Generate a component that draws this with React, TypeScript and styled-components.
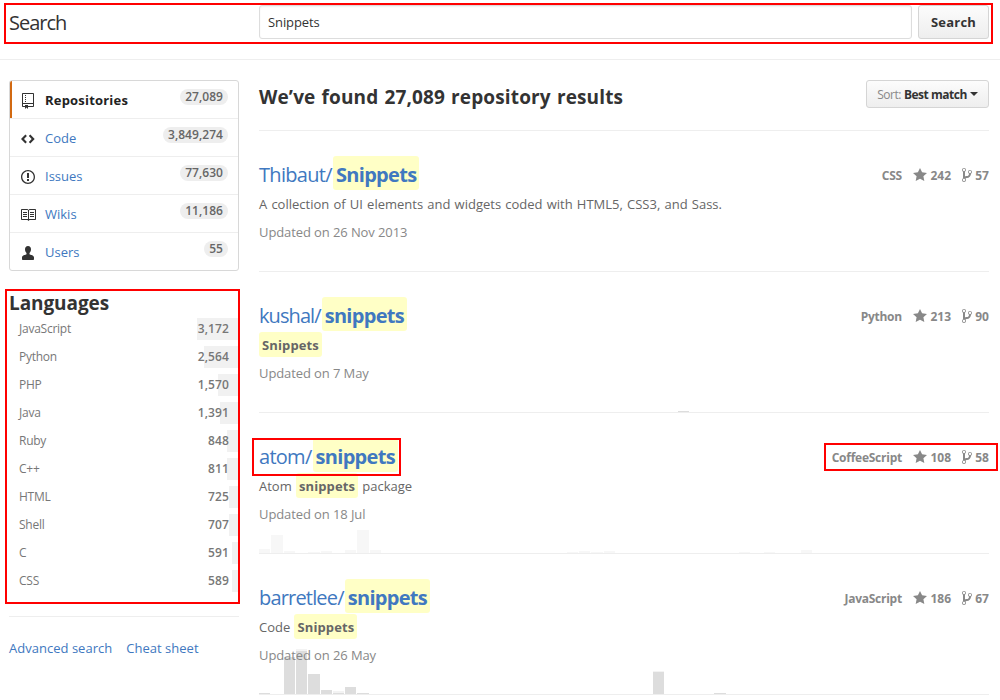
import React from 'react';
import styled, { createGlobalStyle } from 'styled-components';

const GlobalStyle = createGlobalStyle`
  * { box-sizing: border-box; }
  body {
    margin: 0;
    background: #fff;
    color: #333;
    font: 13px/20px "Open Sans", "Noto Sans", sans-serif;
  }
`;

const Page = styled.div`
  position: relative;
  width: 1000px;
  height: 700px;
  overflow: hidden;
`;

const Header = styled.header`
  display: grid;
  grid-template-columns: 250px 653px 71px;
  column-gap: 0;
  height: 60px;
  padding: 5px 11px 0 9px;
  border-bottom: 1px solid #eee;
`;

const PageTitle = styled.h1`
  margin: 0;
  font-size: 20px;
  font-weight: 400;
  line-height: 36px;
  letter-spacing: -1px;
`;

const SearchInput = styled.input`
  width: 653px;
  height: 34px;
  padding: 0 8px;
  border: 1px solid #ddd;
  border-radius: 3px;
  outline: none;
  color: #333;
  font: 13px "Open Sans", sans-serif;
  letter-spacing: -0.1px;
  box-shadow: inset 0 1px 2px rgba(0, 0, 0, 0.06);
`;

const Button = styled.button<{ $compact?: boolean }>`
  display: flex;
  align-items: center;
  justify-content: center;
  gap: 3px;
  width: ${p => (p.$compact ? 123 : 71)}px;
  height: ${p => (p.$compact ? 28 : 34)}px;
  margin-left: ${p => (p.$compact ? 0 : 6)}px;
  padding: 0;
  border: 1px solid #d5d5d5;
  border-radius: 3px;
  background: linear-gradient(#fcfcfc, #eee);
  color: #333;
  font: 700 ${p => (p.$compact ? 12 : 13)}px "Open Sans", sans-serif;
  letter-spacing: ${p => (p.$compact ? -0.48 : 0.2)}px;
`;

const SortLabel = styled.span`
  color: #888;
  font-weight: 400;
`;

const Caret = styled.span`
  border: 4px solid transparent;
  border-top-color: #333;
  border-bottom: 0;
`;

const Columns = styled.div`
  display: grid;
  grid-template-columns: 230px 730px;
  column-gap: 20px;
  padding: 20px 11px 0 9px;
`;

const Menu = styled.nav`
  border: 1px solid #d8d8d8;
  border-radius: 3px;
  overflow: hidden;
`;

const MenuItem = styled.a<{ $active?: boolean }>`
  display: flex;
  align-items: flex-start;
  height: 38px;
  padding: 9px 10px 0 11px;
  border-bottom: 1px solid #eee;
  color: ${p => (p.$active ? '#222' : '#4078c0')};
  font-weight: ${p => (p.$active ? 700 : 400)};
  letter-spacing: ${p => (p.$active ? 0.2 : 0)}px;
  box-shadow: ${p => (p.$active ? 'inset 2px 0 #d26911' : 'none')};
  &:last-child { border-bottom: 0; height: 37px; }
`;

const MenuIcon = styled.svg`
  flex: none;
  width: 16px;
  height: 16px;
  margin: 3px 8px 0 0;
  fill: #333;
`;

const Count = styled.span`
  height: 16px;
  margin: -1px 0 0 auto;
  padding: 0 5px;
  border-radius: 8px;
  background: #eee;
  color: #666;
  font-size: 12px;
  font-weight: 600;
  line-height: 16px;
  letter-spacing: 0.05px;
`;

const SideHeading = styled.h2`
  margin: 18px 0 0;
  font-size: 19px;
  font-weight: 700;
  line-height: 29px;
  letter-spacing: -0.08px;
`;

const LanguageRow = styled.div`
  position: relative;
  display: flex;
  justify-content: space-between;
  height: 22px;
  margin-bottom: 6px;
  padding: 0 10px;
  color: #777;
  font-size: 12px;
  line-height: 22px;
  letter-spacing: -0.25px;
`;

const LanguageBar = styled.span`
  position: absolute;
  top: 0;
  right: 0;
  height: 22px;
  background: #f1f1f1;
`;

const LanguageCount = styled.b`
  position: relative;
  font-weight: 600;
  letter-spacing: 0.1px;
`;

const SideLinks = styled.div`
  display: flex;
  gap: 14px;
  margin-top: 18px;
  padding-top: 21px;
  border-top: 1px solid #eee;
  color: #4078c0;
  letter-spacing: 0.02px;
`;

const LanguageList = styled.div`
  display: flow-root;
`;

const ResultsHead = styled.div`
  display: flex;
  justify-content: space-between;
  height: 51px;
  border-bottom: 1px solid #eee;
`;

const ResultsTitle = styled.h2`
  margin: 0;
  font-size: 19px;
  font-weight: 700;
  line-height: 34px;
  letter-spacing: 0.14px;
  word-spacing: 1px;
`;

const Result = styled.article`
  position: relative;
  height: 141px;
  padding-top: 25px;
  border-bottom: 1px solid #eee;
`;

const ResultTop = styled.div`
  display: flex;
  justify-content: space-between;
  height: 34px;
`;

const RepoName = styled.h3<{ $tracking: number }>`
  display: flex;
  margin: 0;
  color: #4078c0;
  font-size: 20px;
  font-weight: 400;
  line-height: 37px;
  letter-spacing: ${p => p.$tracking}px;
`;

const Mark = styled.mark<{ $large?: boolean }>`
  display: inline-block;
  height: ${p => (p.$large ? 34 : 25)}px;
  margin-left: ${p => (p.$large ? 1 : 0)}px;
  padding: 0 3px;
  border-radius: 3px;
  background: #ffffc6;
  color: inherit;
  font-weight: 700;
  letter-spacing: ${p => (p.$large ? -0.7 : 0.12)}px;
`;

const Stats = styled.div`
  display: flex;
  height: 34px;
  color: #888;
  font-size: 12px;
  font-weight: 700;
  line-height: 40px;
  letter-spacing: -0.25px;
`;

const Language = styled.span`
  margin-right: 11.500px;
`;

const StatNumber = styled.span<{ $last?: boolean }>`
  margin: 0 ${p => (p.$last ? 0 : 11)}px 0 3px;
  letter-spacing: 0.05px;
`;

const StatIcon = styled.svg`
  height: 16px;
  margin-top: 11px;
  fill: #888;
`;

const Description = styled.p`
  display: flex;
  height: 25px;
  margin: 1px 0 0;
  color: #666;
  line-height: 27px;
  letter-spacing: 0;
  word-spacing: 0.8px;
  white-space: pre;
`;

const Updated = styled.p`
  position: relative;
  margin: 6px 0 0;
  color: #888;
  line-height: 21px;
  letter-spacing: -0.1px;
`;

const Chart = styled.svg`
  position: absolute;
  left: 0;
  bottom: 0;
  width: 640px;
  height: 46px;
`;

const Highlight = styled.div<{ $x: number; $y: number; $w: number; $h: number }>`
  position: absolute;
  left: ${p => p.$x}px;
  top: ${p => p.$y}px;
  width: ${p => p.$w}px;
  height: ${p => p.$h}px;
  border: 2px solid #f00;
  pointer-events: none;
`;

const icons = {
  repo: <path d="M4 9H3V8h1v1zm0-3H3v1h1V6zm0-2H3v1h1V4zm0-2H3v1h1V2zm8-1v12c0 .55-.45 1-1 1H6v2l-1.5-1.5L3 16v-2H1c-.55 0-1-.45-1-1V1c0-.55.45-1 1-1h10c.55 0 1 .45 1 1zm-1 10H1v2h2v-1h3v1h5v-2zm0-10H1v9h10V1z" />,
  code: <path d="M9.300 3.600L7.800 5.100 10.700 8 7.800 10.900l1.500 1.500L13.700 8zM4.400 3.600L0 8l4.400 4.400 1.500-1.500L3 8l2.900-2.900z" />,
  issue: <path d="M7 2.300c3.140 0 5.700 2.560 5.700 5.700s-2.560 5.700-5.700 5.700A5.710 5.710 0 0 1 1.300 8c0-3.140 2.560-5.700 5.700-5.700zM7 1C3.140 1 0 4.140 0 8s3.140 7 7 7 7-3.140 7-7-3.140-7-7-7zm1 3H6v5h2V4zm0 6H6v2h2v-2z" />,
  book: <path d="M2 5h4v1H2V5zm0 3h4V7H2v1zm0 2h4V9H2v1zm11-5H9v1h4V5zm0 2H9v1h4V7zm0 2H9v1h4V9zm2-6v9c0 .55-.45 1-1 1H8.500l-1 1-1-1H1c-.55 0-1-.45-1-1V3c0-.55.45-1 1-1h5.500l1 1 1-1H14c.55 0 1 .45 1 1zM7 3.500L6.500 3H1v9h6V3.500zM14 3H8.500l-.5.5V12h6V3z" />,
  person: <path d="M6 1c-2 0-3 1.300-3 3.200 0 1.700.7 3 1.500 3.800v1.200C3 10 0 10.300 0 12.500V14c0 .6.4 1 1 1h10c.6 0 1-.4 1-1v-1.500c0-2.200-3-2.500-4.500-3.300V8C8.300 7.200 9 5.900 9 4.200 9 2.300 8 1 6 1z" />,
};

const menu = [
  { icon: 'repo', label: 'Repositories', count: '27,089', box: '-1 0 16 16' },
  { icon: 'code', label: 'Code', count: '3,849,274', box: '0 0 16 16' },
  { icon: 'issue', label: 'Issues', count: '77,630', box: '0 0 16 16' },
  { icon: 'book', label: 'Wikis', count: '11,186', box: '0 0 16 16' },
  { icon: 'person', label: 'Users', count: '55', box: '-1 0 16 16' },
] as const;

const languages: [string, string, number][] = [
  ['JavaScript', '3,172', 42],
  ['Python', '2,564', 35],
  ['PHP', '1,570', 21],
  ['Java', '1,391', 19],
  ['Ruby', '848', 12],
  ['C++', '811', 12],
  ['HTML', '725', 10],
  ['Shell', '707', 10],
  ['C', '591', 7],
  ['CSS', '589', 7],
];

// Each bar: left edge, width, height, optional colour.
type Bar = [number, number, number, string?];

interface Repo {
  owner: string;
  name: string;
  tracking: number;
  language: string;
  stars: number;
  forks: number;
  description: React.ReactNode;
  updated: string;
  color: string;
  bars: Bar[];
}

const repos: Repo[] = [
  {
    owner: 'Thibaut', name: 'Snippets', tracking: -0.68, language: 'CSS', stars: 242, forks: 57,
    description: 'A collection of UI elements and widgets coded with HTML5, CSS3, and Sass.',
    updated: '26 Nov 2013', color: '#eee', bars: [],
  },
  {
    owner: 'kushal', name: 'snippets', tracking: -0.92, language: 'Python', stars: 213, forks: 90,
    description: <Mark>Snippets</Mark>,
    updated: '7 May', color: '#ddd', bars: [[419, 11, 1]],
  },
  {
    owner: 'atom', name: 'snippets', tracking: -0.72, language: 'CoffeeScript', stars: 108, forks: 58,
    description: <>Atom <Mark>snippets</Mark> package</>,
    updated: '18 Jul', color: '#f7f7f7',
    bars: [[0, 11, 4], [12, 12, 18], [25, 11, 2], [49, 12, 1], [62, 11, 2], [86, 11, 3], [98, 12, 23], [111, 11, 3],
      [308, 11, 1], [320, 11, 2], [332, 12, 1], [345, 11, 2], [480, 11, 1], [505, 11, 1], [542, 11, 3]],
  },
  {
    owner: 'barretlee', name: 'snippets', tracking: -0.82, language: 'JavaScript', stars: 186, forks: 67,
    description: <>Code <Mark>Snippets</Mark></>,
    updated: '26 May', color: '#ddd',
    bars: [[0, 11, 1], [25, 11, 37], [37, 11, 45, '#f3f3f3'], [37, 11, 43], [49, 12, 20], [62, 11, 4],
      [74, 11, 3, '#f3f3f3'], [74, 11, 1], [86, 11, 7], [98, 12, 1],
      [394, 11, 23, '#f3f3f3'], [394, 11, 22], [455, 12, 1]],
  },
];

export default function App() {
  return (
    <>
      <GlobalStyle />
      <Page>
        <Header>
          <PageTitle>Search</PageTitle>
          <SearchInput defaultValue="Snippets" />
          <Button>Search</Button>
        </Header>
        <Columns>
          <aside>
            <Menu>
              {menu.map((m, i) => (
                <MenuItem key={m.label} $active={i === 0}>
                  <MenuIcon viewBox={m.box}>{icons[m.icon]}</MenuIcon>
                  {m.label}
                  <Count>{m.count}</Count>
                </MenuItem>
              ))}
            </Menu>
            <SideHeading>Languages</SideHeading>
            <LanguageList>
              {languages.map(([name, count, width]) => (
                <LanguageRow key={name}>
                  <LanguageBar style={{ width }} />
                  <span>{name}</span>
                  <LanguageCount>{count}</LanguageCount>
                </LanguageRow>
              ))}
            </LanguageList>
            <SideLinks>
              <span>Advanced search</span>
              <span>Cheat sheet</span>
            </SideLinks>
          </aside>
          <main>
            <ResultsHead>
              <ResultsTitle>We’ve found 27,089 repository results</ResultsTitle>
              <Button $compact>
                <SortLabel>Sort:</SortLabel>
                Best match
                <Caret />
              </Button>
            </ResultsHead>
            {repos.map(r => (
              <Result key={r.owner}>
                <Chart viewBox="0 0 640 46" shapeRendering="crispEdges">
                  {r.bars.map(([x, w, h, c], i) => (
                    <rect key={i} x={x} y={46 - h} width={w} height={h} fill={c ?? r.color} />
                  ))}
                </Chart>
                <ResultTop>
                  <RepoName $tracking={r.tracking}>{r.owner}/<Mark $large>{r.name}</Mark></RepoName>
                  <Stats>
                    <Language>{r.language}</Language>
                    <StatIcon width="14" viewBox="0 0 14 16">
                      <path d="M14 6l-4.900-.64L7 1 4.900 5.360 0 6l3.600 3.260L2.670 14 7 11.670 11.330 14l-.93-4.740z" />
                    </StatIcon>
                    <StatNumber>{r.stars}</StatNumber>
                    <StatIcon width="10" viewBox="0 0 10 16">
                      <path d="M10 5c0-1.110-.89-2-2-2a1.993 1.993 0 0 0-1 3.720v.3c-.02.52-.23.98-.63 1.380-.4.4-.86.61-1.380.63-.83.02-1.480.16-2 .45V4.720a1.993 1.993 0 0 0-1-3.720C.88 1 0 1.890 0 3a2 2 0 0 0 1 1.720v6.560c-.59.35-1 .99-1 1.720 0 1.110.89 2 2 2 1.110 0 2-.89 2-2 0-.53-.2-1-.53-1.360.09-.06.48-.41.59-.47.25-.11.56-.17.94-.17 1.050-.05 1.950-.45 2.750-1.250S8.950 7.770 9 6.730h-.02C9.590 6.370 10 5.730 10 5zM2 1.800c.66 0 1.200.55 1.200 1.200 0 .65-.55 1.200-1.200 1.200C1.350 4.200.8 3.650.8 3c0-.65.55-1.200 1.200-1.200zm0 12.410c-.66 0-1.200-.55-1.200-1.200 0-.65.55-1.200 1.200-1.200.65 0 1.200.55 1.200 1.200 0 .65-.55 1.200-1.200 1.200zm6-8c-.66 0-1.200-.55-1.200-1.200 0-.65.55-1.200 1.200-1.200.65 0 1.200.55 1.200 1.200 0 .65-.55 1.200-1.200 1.200z" />
                    </StatIcon>
                    <StatNumber $last>{r.forks}</StatNumber>
                  </Stats>
                </ResultTop>
                <Description>{r.description}</Description>
                <Updated>Updated on {r.updated}</Updated>
              </Result>
            ))}
          </main>
        </Columns>
        <Highlight $x={4} $y={3} $w={989} $h={41} />
        <Highlight $x={5} $y={289} $w={235} $h={315} />
        <Highlight $x={252} $y={438} $w={149} $h={38} />
        <Highlight $x={824} $y={443} $w={174} $h={28} />
      </Page>
    </>
  );
}
